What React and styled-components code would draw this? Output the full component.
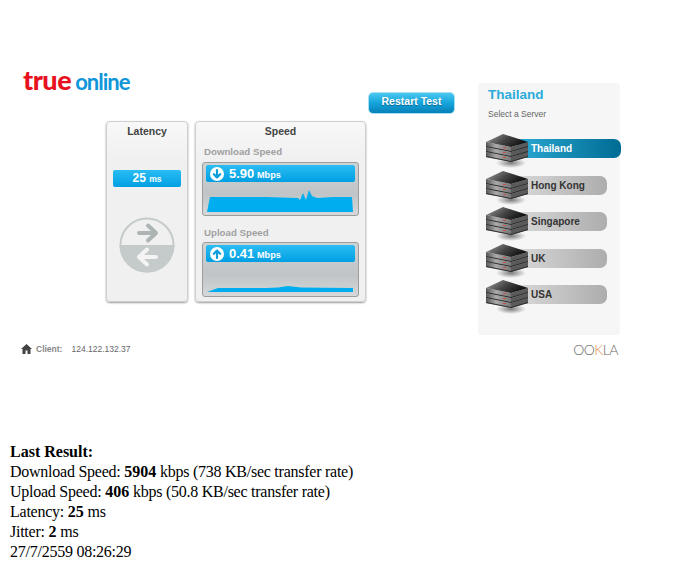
import React from 'react'
import styled, { createGlobalStyle } from 'styled-components'

const Global = createGlobalStyle`
  html, body { margin: 0; padding: 0; background: #fff; }
`

const Stage = styled.div`
  width: 675px;
  height: 442px;
  font-family: "Liberation Sans", Arial, sans-serif;
  display: flex;
  flex-direction: column;
`

const Main = styled.div`
  display: flex;
  height: 335px;
`

const LeftCol = styled.div`
  width: 478px;
  padding-top: 68px;
  box-sizing: border-box;
`

const Logo = styled.div`
  margin-left: 23px;
  height: 24px;
  display: flex;
  align-items: baseline;
  font-family: Lato, "Liberation Sans", sans-serif;
  line-height: 24px;
`

const LogoTrue = styled.span`
  color: #e8121f;
  font-weight: 900;
  font-size: 27px;
  letter-spacing: -0.5px;
`

const LogoOnline = styled.span`
  color: #0f96d8;
  font-weight: 700;
  font-size: 22px;
  margin-left: 4px;
  letter-spacing: -1px;
`

const RestartButton = styled.button`
  display: block;
  margin: 0 0 0 368px;
  width: 87px;
  height: 22px;
  padding: 0 0 4px;
  border: 1px solid #a8def2;
  border-radius: 5px;
  background: linear-gradient(#4cc8f0 0%, #18a8de 45%, #0580b8 100%);
  color: #fff;
  font: bold 10.5px "Liberation Sans", Arial, sans-serif;
  text-shadow: 0 1px 1px rgba(0, 60, 90, 0.5);
`

const Panels = styled.div`
  display: flex;
  gap: 7px;
  margin: 7px 0 0 106px;
`

const Panel = styled.section`
  width: ${p => p.$width}px;
  height: 181px;
  box-sizing: border-box;
  background: linear-gradient(#f8f8f8 0, #f0f0f0 40px);
  border: 1px solid #cfcfcf;
  border-radius: 4px;
  box-shadow: 0 1px 2px rgba(0, 0, 0, 0.4);
  display: flex;
  flex-direction: column;
`

const PanelTitle = styled.h3`
  margin: 2px 0 0;
  font-size: 10.5px;
  line-height: 14px;
  font-weight: bold;
  color: #444;
  text-align: center;
`

const LatencyBadge = styled.div`
  margin: 32px 0 0 6px;
  width: 68px;
  height: 17px;
  border-radius: 2px;
  background: linear-gradient(#2bbdf3, #009fe3);
  color: #fff;
  font-weight: bold;
  font-size: 12px;
  line-height: 17px;
  text-align: center;
  small { font-size: 8.5px; }
`

const LatencyDial = styled.svg`
  display: block;
  margin: 30px 0 0 12px;
`

const SpeedLabel = styled.div`
  margin: ${p => p.$top}px 0 ${p => p.$gap}px 8px;
  font-size: 9.7px;
  line-height: 12px;
  font-weight: bold;
  color: #a0a0a0;
`

const GraphBox = styled.div`
  margin-left: 6px;
  width: 157px;
  height: ${p => p.$height}px;
  box-sizing: border-box;
  padding: 2px 3px 0;
  border: 1px solid #9c9c9c;
  border-radius: 3px;
  background: linear-gradient(#d0d2d3, #c0c4c6 60%, #d6d8d9);
`

const SpeedBar = styled.div`
  height: 17px;
  border-radius: 2px;
  background: linear-gradient(#2bbdf3, #009fe3);
  display: flex;
  align-items: center;
  padding-left: 4px;
  color: #fff;
  font-weight: bold;
`

const SpeedIcon = styled.svg`
  display: block;
  flex: none;
`

const SpeedValue = styled.span`
  margin-left: 5px;
  font-size: 13px;
  word-spacing: -1px;
  small { font-size: 9.2px; }
`

const Chart = styled.svg`
  display: block;
  margin-top: 7px;
`

const Sidebar = styled.aside`
  margin-top: 83px;
  width: 142px;
  height: 252px;
  box-sizing: border-box;
  padding: 4px 0 0 10px;
  background: #f6f6f6;
  border-radius: 4px;
`

const SidebarTitle = styled.h2`
  margin: 0;
  font-size: 13.5px;
  line-height: 16px;
  font-weight: bold;
  color: #29abdb;
`

const SidebarHint = styled.div`
  margin-top: 5px;
  font-size: 8.5px;
  line-height: 12px;
  color: #666;
`

const ServerList = styled.div`
  margin: 14px 0 0 -2px;
`

const ServerRow = styled.div`
  display: flex;
  height: 36.5px;
  align-items: flex-start;
`

const ServerGlyph = styled.svg`
  display: block;
  flex: none;
  position: relative;
  z-index: 1;
`

const ServerPill = styled.div`
  margin: 5px 0 0 -12px;
  width: ${p => (p.$active ? 104 : 90)}px;
  height: 19px;
  flex: none;
  box-sizing: border-box;
  padding-left: 14px;
  border-radius: 0 7px 7px 0;
  font-size: 10px;
  line-height: 19px;
  font-weight: bold;
  color: ${p => (p.$active ? '#fff' : '#333')};
  background: ${p =>
    p.$active
      ? 'linear-gradient(90deg, #2aa8d2, #006c94)'
      : 'linear-gradient(90deg, #d8d8d8, #adadad)'};
`

const Footer = styled.div`
  display: flex;
  align-items: center;
  justify-content: space-between;
  height: 28px;
  padding: 0 57px 0 21px;
`

const Client = styled.div`
  display: flex;
  align-items: center;
  font-size: 8.5px;
  color: #666;
`

const ClientLabel = styled.span`
  margin: 0 9px 0 4px;
  font-weight: bold;
  color: #888;
`

const Ookla = styled.div`
  font-family: Lato, "Liberation Sans", sans-serif;
  font-weight: 300;
  font-size: 14px;
  letter-spacing: -0.5px;
  color: #666;
  span { color: #e08a3c; }
`

const Results = styled.div`
  padding-left: 10px;
  font-family: "Liberation Serif", "Times New Roman", serif;
  font-size: 16px;
  line-height: 19.9px;
  letter-spacing: -0.25px;
  color: #000;
  b { letter-spacing: 0; }
`

const ServerIcon = () => {
  const slab = y => (
    <g key={y}>
      <polygon points={`0,${y} 25,${y + 5} 25,${y + 10} 0,${y + 5}`} fill="url(#serverLeft)" />
      <polygon points={`25,${y + 5} 42,${y} 42,${y + 5} 25,${y + 10}`} fill="#5a5a5a" />
      <polygon points={`0,${y + 4} 25,${y + 9} 42,${y + 4} 42,${y + 5} 25,${y + 10} 0,${y + 5}`} fill="#2e2e2e" />
      <rect x="17" y={y + 5} width="3" height="1" fill="#c8504a" />
    </g>
  )
  return (
    <ServerGlyph width="43" height="34" viewBox="0 0 43 34">
      <defs>
        <linearGradient id="serverTop" x1="0" y1="0" x2="1" y2="0.4">
          <stop offset="0" stopColor="#a0a0a0" />
          <stop offset="0.55" stopColor="#444" />
          <stop offset="1" stopColor="#111" />
        </linearGradient>
        <linearGradient id="serverLeft" x1="0" y1="0" x2="1" y2="0">
          <stop offset="0" stopColor="#555" />
          <stop offset="0.4" stopColor="#aaa" />
          <stop offset="1" stopColor="#777" />
        </linearGradient>
        <radialGradient id="serverShadow">
          <stop offset="0" stopColor="#000" stopOpacity="0.5" />
          <stop offset="1" stopColor="#000" stopOpacity="0" />
        </radialGradient>
      </defs>
      <ellipse cx="25" cy="29" rx="15" ry="5" fill="url(#serverShadow)" />
      {[18, 13, 8].map(slab)}
      <polygon points="0,8 17,0 42,8 25,13" fill="url(#serverTop)" />
    </ServerGlyph>
  )
}

const ArrowBadge = ({ up }) => (
  <SpeedIcon width="14" height="14" viewBox="0 0 14 14">
    <circle cx="7" cy="7" r="7" fill="#fff" />
    <path
      d={up ? 'M7 11V4M3.8 6.8 7 3.6l3.2 3.2' : 'M7 3v7M3.8 7.2 7 10.4l3.2-3.2'}
      stroke="#0a9fdc"
      strokeWidth="2.2"
      strokeLinecap="round"
      strokeLinejoin="round"
      fill="none"
    />
  </SpeedIcon>
)

const servers = ['Thailand', 'Hong Kong', 'Singapore', 'UK', 'USA']

export default function App() {
  return (
    <>
      <Global />
      <Stage>
        <Main>
          <LeftCol>
            <Logo>
              <LogoTrue>true</LogoTrue>
              <LogoOnline>online</LogoOnline>
            </Logo>
            <RestartButton>Restart Test</RestartButton>
            <Panels>
              <Panel $width={82}>
                <PanelTitle>Latency</PanelTitle>
                <LatencyBadge>
                  25 <small>ms</small>
                </LatencyBadge>
                <LatencyDial width="56" height="56" viewBox="0 0 56 56">
                  <circle cx="28" cy="28" r="26.5" fill="#f0f0f0" stroke="#c5cbcb" strokeWidth="2" />
                  <path d="M0.5 28a27.5 27.5 0 0 0 55 0z" fill="#c5cbcb" />
                  <path d="M20 16h17M29 8.500l8 7.500-8 7.500" stroke="#aeb4b4" strokeWidth="4" strokeLinecap="round" strokeLinejoin="round" fill="none" />
                  <path d="M37 40H20M28 32.500l-8 7.500 8 7.500" stroke="#f4f4f4" strokeWidth="4" strokeLinecap="round" strokeLinejoin="round" fill="none" />
                </LatencyDial>
              </Panel>
              <Panel $width={171}>
                <PanelTitle>Speed</PanelTitle>
                <SpeedLabel $top={8} $gap={4}>Download Speed</SpeedLabel>
                <GraphBox $height={54}>
                  <SpeedBar>
                    <ArrowBadge />
                    <SpeedValue>
                      5.90 <small>Mbps</small>
                    </SpeedValue>
                  </SpeedBar>
                  <Chart width="149" height="23" viewBox="0 0 149 23">
                    <path
                      d="M1 23 4 8H60L92 9 94 11 97 4 100 11 103 1 106 7 111 9 127 8 146 8 147 23Z"
                      fill="#00aeef"
                    />
                  </Chart>
                </GraphBox>
                <SpeedLabel $top={11} $gap={3}>Upload Speed</SpeedLabel>
                <GraphBox $height={55}>
                  <SpeedBar>
                    <ArrowBadge up />
                    <SpeedValue>
                      0.41 <small>Mbps</small>
                    </SpeedValue>
                  </SpeedBar>
                  <Chart width="149" height="23" viewBox="0 0 149 23">
                    <path d="M1 23 12 19H60L72 18.500 82 17 95 18.500 147 19 147 23Z" fill="#00aeef" />
                  </Chart>
                </GraphBox>
              </Panel>
            </Panels>
          </LeftCol>
          <Sidebar>
            <SidebarTitle>Thailand</SidebarTitle>
            <SidebarHint>Select a Server</SidebarHint>
            <ServerList>
              {servers.map((name, i) => (
                <ServerRow key={name}>
                  <ServerIcon />
                  <ServerPill $active={i === 0}>{name}</ServerPill>
                </ServerRow>
              ))}
            </ServerList>
          </Sidebar>
        </Main>
        <Footer>
          <Client>
            <svg width="11" height="10" viewBox="0 0 11 10">
              <path d="M5.500 0 11 5H9.500V10H6.500V6.500H4.500V10H1.500V5H0Z" fill="#444" />
            </svg>
            <ClientLabel>Client:</ClientLabel>
            124.122.132.37
          </Client>
          <Ookla>
            OO<span>K</span>LA
          </Ookla>
        </Footer>
      </Stage>
      <Results>
        <b>Last Result:</b>
        <br />
        Download Speed: <b>5904</b> kbps (738 KB/sec transfer rate)
        <br />
        Upload Speed: <b>406</b> kbps (50.8 KB/sec transfer rate)
        <br />
        Latency: <b>25</b> ms
        <br />
        Jitter: <b>2</b> ms
        <br />
        27/7/2559 08:26:29
      </Results>
    </>
  )
}
